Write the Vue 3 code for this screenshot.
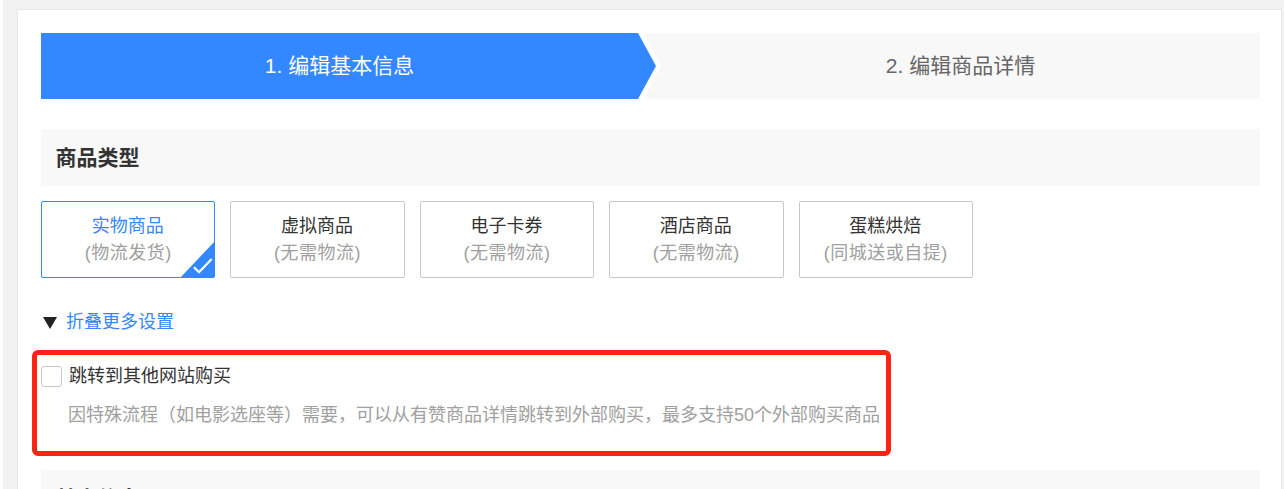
<script setup>
const types = [
  { name: '实物商品', note: '(物流发货)', active: true },
  { name: '虚拟商品', note: '(无需物流)' },
  { name: '电子卡券', note: '(无需物流)' },
  { name: '酒店商品', note: '(无需物流)' },
  { name: '蛋糕烘焙', note: '(同城送或自提)' },
]
</script>

<template>
  <div class="page">
    <div class="panel">
      <div class="steps">
        <div class="step step-on">1. 编辑基本信息</div>
        <div class="step step-off">2. 编辑商品详情</div>
      </div>

      <h2 class="section-title">商品类型</h2>

      <div class="types">
        <div v-for="t in types" :key="t.name" class="type" :class="{ 'type-on': t.active }">
          <div class="type-name">{{ t.name }}</div>
          <div class="type-note">{{ t.note }}</div>
          <svg v-if="t.active" class="corner" width="35" height="37" viewBox="0 0 35 37">
            <path d="M35 0V34a3 3 0 0 1-3 3H0Z" fill="#3388ff" />
            <path d="M14 26.3l5 5L31.7 18" fill="none" stroke="#fff" stroke-width="2.2" />
          </svg>
        </div>
      </div>

      <div class="toggle">
        <span class="arrow"></span>
        <a class="toggle-link">折叠更多设置</a>
      </div>

      <div class="jump">
        <label class="check">
          <span class="box"></span>
          <span>跳转到其他网站购买</span>
        </label>
        <p class="desc">因特殊流程&#xFF08;如电影选座等&#xFF09;需要&#xFF0C;可以从有赞商品详情跳转到外部购买&#xFF0C;最多支持50个外部购买商品</p>
        <div class="highlight"></div>
      </div>

      <h2 class="section-title section-next">基本信息</h2>
    </div>
  </div>
</template>

<style scoped>
.page {
  box-sizing: border-box;
  height: 489px;
  overflow: hidden;
  margin-left: 3px;
  padding: 9px 2px 0 14px;
  background: #f2f2f2;
  font-family: "Liberation Sans", "Noto Sans CJK SC", sans-serif;
  color: #333;
}
.panel {
  box-sizing: border-box;
  height: 600px;
  padding: 23px 21px 0 23px;
  background: #fff;
  border: 1px solid #e8e8e8;
}
.steps {
  display: flex;
  height: 66px;
  font-size: 21px;
  line-height: 66px;
  text-align: center;
}
.step {
  box-sizing: border-box;
}
.step-on {
  flex: 0 0 615px;
  padding-right: 18px;
  color: #fff;
  background: #3388ff;
  clip-path: polygon(0 0, 597px 0, 615px 50%, 597px 100%, 0 100%);
}
.step-off {
  flex: 1;
  margin-left: -12px;
  padding-left: 17px;
  color: #666;
  background: #f8f8f8;
  clip-path: polygon(0 0, 100% 0, 100% 100%, 0 100%, 17px 50%);
}
.section-title {
  margin: 30px 0 0;
  height: 57px;
  padding-left: 14.6px;
  background: #f8f8f8;
  font-size: 21px;
  font-weight: 700;
  line-height: 57px;
  color: #333;
}
.types {
  display: flex;
  gap: 15px;
  margin-top: 15px;
}
.type {
  position: relative;
  box-sizing: border-box;
  width: 174.4px;
  height: 77px;
  padding-top: 11px;
  border: 1px solid #c8c8c8;
  border-radius: 2px;
  text-align: center;
  font-size: 18px;
  line-height: 27px;
}
.type-name {
  padding-right: 1px;
}
.type-note {
  color: #a0a0a0;
  letter-spacing: 0.5px;
}
.type-on {
  border-color: #3388ff;
}
.type-on .type-name {
  color: #3388ff;
}
.corner {
  position: absolute;
  right: -1px;
  bottom: -1px;
}
.toggle {
  display: flex;
  align-items: center;
  gap: 9px;
  margin-top: 31px;
  padding-left: 2px;
  height: 27px;
  font-size: 18px;
  line-height: 27px;
}
.arrow {
  width: 0;
  height: 0;
  border-left: 7px solid transparent;
  border-right: 7px solid transparent;
  border-top: 12px solid #222;
}
.toggle-link {
  color: #3388ff;
}
.jump {
  position: relative;
  margin-top: 14px;
  height: 106px;
}
.check {
  display: flex;
  align-items: center;
  gap: 7px;
  padding-top: 14px;
  font-size: 18px;
  line-height: 24px;
  color: #333;
}
.box {
  box-sizing: border-box;
  width: 21px;
  height: 21px;
  background: #fff;
  border: 1px solid #c8c8c8;
  border-radius: 3px;
}
.desc {
  margin: 14px 0 0 27px;
  font-size: 18px;
  line-height: 27px;
  color: #a0a0a0;
  white-space: nowrap;
}
.highlight {
  position: absolute;
  box-sizing: border-box;
  inset: 0 auto auto -9px;
  width: 859px;
  height: 106px;
  border: 5px solid #ff2314;
  border-radius: 6px;
}
.section-next {
  margin-top: 14px;
}
</style>
